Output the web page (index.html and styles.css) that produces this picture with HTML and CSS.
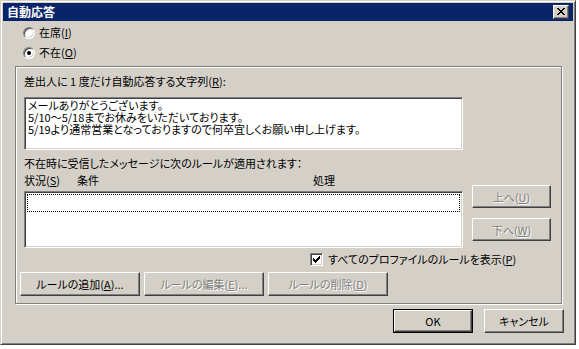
FILE: index.html
```html
<!DOCTYPE html>
<html lang="ja">
<head>
<meta charset="utf-8">
<title>自動応答</title>
<link rel="stylesheet" href="styles.css">
</head>
<body>
<div class="dialog">
  <div class="titlebar">
    <span class="title">自動応答</span>
    <span class="close">
      <svg width="8" height="7" viewBox="0 0 8 7" shape-rendering="crispEdges">
        <path d="M0 0h2v1h-2zM6 0h2v1h-2zM1 1h2v1h-2zM5 1h2v1h-2zM2 2h4v1h-4zM3 3h2v1h-2zM2 4h4v1h-4zM1 5h2v1h-2zM5 5h2v1h-2zM0 6h2v1h-2zM6 6h2v1h-2z" fill="#000"/>
      </svg>
    </span>
  </div>
  <div class="radios">
    <div class="radio"><span class="rb"></span><span>在席(<u>I</u>)</span></div>
    <div class="radio"><span class="rb checked"></span><span>不在(<u>O</u>)</span></div>
  </div>
  <div class="group">
    <div class="glabel">差出人に 1 度だけ自動応答する文字列(<u>R</u>):</div>
    <div class="textbox"><div class="tl">メールありがとうございます。</div><div class="tl">5/10～5/18までお休みをいただいております。</div><div class="tl">5/19より通常営業となっておりますので何卒宜しくお願い申し上げます。</div></div>
    <div class="rules">
      <div class="rules-left">
        <div class="note">不在時に受信したメッセージに次のルールが適用されます：</div>
        <div class="cols"><span class="c1">状況(<u>S</u>)</span><span class="c2">条件</span><span class="c3">処理</span></div>
        <div class="list"><div class="focusrow"></div></div>
      </div>
      <div class="rules-right">
        <div class="btn disabled side">上へ(<u>U</u>)</div>
        <div class="btn disabled side">下へ(<u>W</u>)</div>
      </div>
    </div>
    <div class="showall">
      <span class="cb">
        <svg width="7" height="7" viewBox="0 0 7 7" shape-rendering="crispEdges">
          <path d="M6 0h1v1h-1zM5 1h2v1h-2zM0 2h1v1h-1zM4 2h3v1h-3zM0 3h2v1h-2zM3 3h3v1h-3zM0 4h5v1h-5zM1 5h3v1h-3zM2 6h1v1h-1z" fill="#000"/>
        </svg>
      </span>
      <span>すべてのプロファイルのルールを表示(<u>P</u>)</span>
    </div>
    <div class="rulebtns">
      <div class="btn rb-btn">ルールの追加(<u>A</u>)...</div>
      <div class="btn rb-btn disabled">ルールの編集(<u>E</u>)...</div>
      <div class="btn rb-btn disabled">ルールの削除(<u>D</u>)</div>
    </div>
  </div>
  <div class="footer">
    <div class="default"><div class="btn foot">OK</div></div>
    <div class="btn foot">キャンセル</div>
  </div>
</div>
</body>
</html>
```
FILE: styles.css
```css
* { box-sizing: border-box; }
html, body { margin: 0; padding: 0; background: #fff; }
body {
  font-family: "MS UI Gothic", "Noto Sans CJK JP", sans-serif;
  font-size: 11px;
  color: #000;
  font-feature-settings: "palt";
}
u { text-decoration: underline; text-underline-offset: 1px; }

.dialog {
  width: 576px;
  height: 345px;
  background: #d4d0c8;
  border: 1px solid;
  border-color: #d4d0c8 #404040 #404040 #d4d0c8;
  box-shadow: inset 1px 1px #fff, inset -1px -1px #808080;
  padding: 2px;
  display: flex;
  flex-direction: column;
}

.titlebar {
  height: 18px;
  background: #0a246a;
  display: flex;
  align-items: center;
  justify-content: space-between;
  padding-left: 4px;
  padding-right: 4px;
}
.title {
  color: #fff;
  font-weight: bold;
  font-size: 12px;
  line-height: 18px;
}
.close {
  width: 16px;
  height: 14px;
  background: #d4d0c8;
  border: 1px solid;
  border-color: #fff #404040 #404040 #fff;
  box-shadow: inset -1px -1px #808080;
  display: flex;
  align-items: center;
  justify-content: center;
  padding-bottom: 1px;
}
.close svg { display: block; }

.radios {
  margin: 5px 0 0 20px;
  display: flex;
  flex-direction: column;
  gap: 7px;
}
.radio {
  height: 13px;
  display: flex;
  align-items: center;
  gap: 4px;
  line-height: 13px;
}
.rb {
  width: 12px;
  height: 12px;
  border-radius: 50%;
  background: #fff;
  border: 1px solid;
  border-color: #808080 #fff #fff #808080;
  box-shadow: inset 1px 1px #404040, inset -1px -1px #d4d0c8;
  position: relative;
}
.rb.checked::after {
  content: "";
  position: absolute;
  left: 3px;
  top: 3px;
  width: 4px;
  height: 4px;
  border-radius: 50%;
  background: #000;
}

.group {
  margin: 7px 0 0 12px;
  width: 547px;
  height: 238px;
  border: 1px solid #808080;
  box-shadow: inset 1px 1px #fff, 1px 1px #fff;
  padding: 7px 0 0 8px;
}
.glabel {
  height: 14px;
  line-height: 14px;
  margin-bottom: 9px;
}
.textbox {
  width: 439px;
  height: 53px;
  background: #fff;
  border: 1px solid;
  border-color: #808080 #fff #fff #808080;
  box-shadow: inset 1px 1px #404040, inset -1px -1px #d4d0c8;
  padding: 1px 2px 0 3px;
  white-space: nowrap;
}
.tl { height: 12px; line-height: 12px; }

.rules {
  display: flex;
  margin-top: 6px;
}
.rules-left { width: 439px; }
.note, .cols { height: 14px; line-height: 14px; white-space: nowrap; }
.cols { margin-top: 3px; display: flex; }
.c1 { width: 53px; }
.c2 { width: 236px; }
.list {
  margin-top: 4px;
  height: 57px;
  background: #fff;
  border: 1px solid;
  border-color: #808080 #fff #fff #808080;
  box-shadow: inset 1px 1px #404040, inset -1px -1px #d4d0c8;
  padding: 2px 2px;
}
.focusrow {
  height: 18px;
  border: 1px dotted #000;
}
.rules-right {
  margin-left: 9px;
  padding-top: 29px;
  display: flex;
  flex-direction: column;
  gap: 10px;
}

.btn {
  background: #d4d0c8;
  border: 1px solid;
  border-color: #fff #404040 #404040 #fff;
  box-shadow: inset -1px -1px #808080;
  display: flex;
  align-items: center;
  justify-content: center;
  white-space: nowrap;
  line-height: 14px;
}
.btn.disabled {
  color: #808080;
  text-shadow: 1px 1px 0 #fff;
}
.side { width: 79px; height: 23px; }

.showall {
  margin: 5px 0 0 286px;
  height: 13px;
  display: flex;
  align-items: center;
  gap: 5px;
  line-height: 13px;
}
.cb {
  width: 13px;
  height: 13px;
  background: #fff;
  border: 1px solid;
  border-color: #808080 #fff #fff #808080;
  box-shadow: inset 1px 1px #404040, inset -1px -1px #d4d0c8;
  display: flex;
  align-items: center;
  justify-content: center;
}
.cb svg { display: block; }

.rulebtns {
  margin: 6px 0 0 -4px;
  display: flex;
  gap: 4px;
}
.rb-btn { width: 120px; height: 24px; }

.footer {
  margin: 5px 9px 0 0;
  display: flex;
  justify-content: flex-end;
  gap: 11px;
}
.default {
  border: 1px solid #000;
}
.default .btn { width: 78px; height: 22px; }
.foot { width: 80px; height: 24px; }
```
